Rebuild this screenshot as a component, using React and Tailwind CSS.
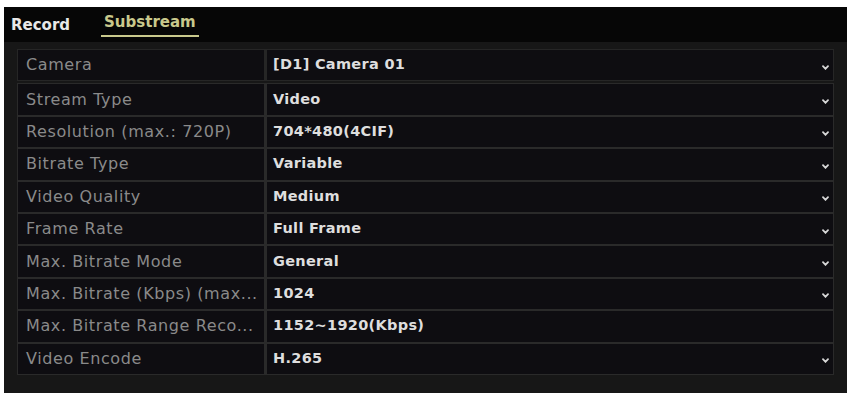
import React from 'react';

const rows = [
    { label: 'Stream Type', value: 'Video', dropdown: true },
    { label: 'Resolution (max.: 720P)', value: '704*480(4CIF)', dropdown: true },
    { label: 'Bitrate Type', value: 'Variable', dropdown: true },
    { label: 'Video Quality', value: 'Medium', dropdown: true },
    { label: 'Frame Rate', value: 'Full Frame', dropdown: true },
    { label: 'Max. Bitrate Mode', value: 'General', dropdown: true },
    { label: 'Max. Bitrate (Kbps) (max...', value: '1024', dropdown: true },
    { label: 'Max. Bitrate Range Reco...', value: '1152~1920(Kbps)', dropdown: false },
    { label: 'Video Encode', value: 'H.265', dropdown: true },
];

const Chevron = () => (
    <svg width="7" height="5" viewBox="0 0 7 5" className="mt-[4px]">
        <path d="M1 1.2 L3.5 3.8 L6 1.2" stroke="#d8d8d8" strokeWidth="1.8" fill="none" strokeLinecap="round" />
    </svg>
);

const Row = ({ label, value, dropdown }) => (
    <div className="flex h-[30.4px] gap-[3px]">
        <div className="w-[246px] bg-[#0e0d11] flex items-center pl-[8px] text-[16px] tracking-[0.6px] text-[#8a8a8a] whitespace-nowrap overflow-hidden">
            {label}
        </div>
        <div className="flex-1 bg-[#0e0d11] flex items-center justify-between pl-[6px] pr-[4px]">
            <span className="text-[14.5px] font-bold tracking-[0.3px] text-[#dedede]">{value}</span>
            {dropdown && <Chevron />}
        </div>
    </div>
);

const App = () => {
    return (
        <div className="w-[851px] h-[395px] bg-white pt-[7px] pl-[4px] pr-[4px] pb-[2px]" style={{ fontFamily: '"DejaVu Sans", sans-serif' }}>
            <div className="h-full flex flex-col bg-[#171717]">
                <div className="h-[35px] bg-[#060606] flex items-end pl-[7px] gap-[31px]">
                    <div className="pb-[6px] text-[15px] font-bold text-[#e8e8e8]">Record</div>
                    <div className="pb-[5px] border-b-[2px] border-[#c9c98c] px-[3px] text-[15px] font-bold text-[#c9c98c] mb-[5px] leading-none pt-[3px]">Substream</div>
                </div>
                <div className="px-[13px] pt-[7px]">
                    <div className="bg-[#262626] p-[1px]">
                        <Row label="Camera" value="[D1] Camera 01" dropdown />
                    </div>
                    <div className="mt-[2px] bg-[#2a2a2a] p-[1px] flex flex-col gap-[2px]">
                        {rows.map((r) => (
                            <Row key={r.label} {...r} />
                        ))}
                    </div>
                </div>
            </div>
        </div>
    );
};

export default App;
